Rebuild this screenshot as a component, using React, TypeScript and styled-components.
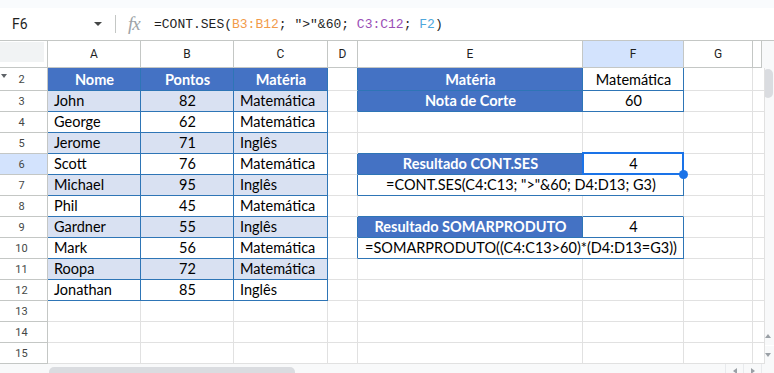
import { Fragment } from "react";
import styled, { createGlobalStyle } from "styled-components";

const BLUE = "#2e75b6";
const GRID = "#e1e1e1";
const HEAD_LINE = "#c4c7c5";
const FILL_HEAD = "#4472c4";
const FILL_BAND = "#d9e1f2";
const SELECT = "#1a73e8";
const ACTIVE = "#d3e3fd";

type Fill = "head" | "band" | "none";
type Align = "left" | "center";

interface CellData {
  text?: string;
  fill?: Fill;
  align?: Align;
  span?: number;
  selected?: boolean;
}

const COLUMNS = [
  { label: "A", width: 93 },
  { label: "B", width: 93 },
  { label: "C", width: 94 },
  { label: "D", width: 30 },
  { label: "E", width: 225 },
  { label: "F", width: 101 },
  { label: "G", width: 69 },
  { label: "", width: 9 },
];

const ROWS = Array.from({ length: 14 }, (_, i) => i + 2);

// blue bordered ranges (row from/to, col index from/to)
const TABLES = [
  { r1: 2, r2: 12, c1: 0, c2: 2 },
  { r1: 2, r2: 3, c1: 4, c2: 5 },
  { r1: 6, r2: 7, c1: 4, c2: 5 },
  { r1: 9, r2: 10, c1: 4, c2: 5 },
];

const inTable = (r: number, c: number) =>
  TABLES.some((t) => r >= t.r1 && r <= t.r2 && c >= t.c1 && c <= t.c2);

const students = [
  ["John", "82", "Matemática"],
  ["George", "62", "Matemática"],
  ["Jerome", "71", "Inglês"],
  ["Scott", "76", "Matemática"],
  ["Michael", "95", "Inglês"],
  ["Phil", "45", "Matemática"],
  ["Gardner", "55", "Inglês"],
  ["Mark", "56", "Matemática"],
  ["Roopa", "72", "Matemática"],
  ["Jonathan", "85", "Inglês"],
];

const summary: Record<number, CellData[]> = {
  2: [
    { text: "Matéria", fill: "head", align: "center" },
    { text: "Matemática", align: "center" },
  ],
  3: [
    { text: "Nota de Corte", fill: "head", align: "center" },
    { text: "60", align: "center" },
  ],
  6: [
    { text: "Resultado CONT.SES", fill: "head", align: "center" },
    { text: "4", align: "center", selected: true },
  ],
  7: [{ text: '=CONT.SES(C4:C13; ">"&60; D4:D13; G3)', align: "center", span: 2 }],
  9: [
    { text: "Resultado SOMARPRODUTO", fill: "head", align: "center" },
    { text: "4", align: "center" },
  ],
  10: [{ text: "=SOMARPRODUTO((C4:C13>60)*(D4:D13=G3))", align: "center", span: 2 }],
};

function rowCells(r: number): CellData[] {
  let left: CellData[] = [{}, {}, {}];
  if (r === 2) {
    left = ["Nome", "Pontos", "Matéria"].map((text) => ({ text, fill: "head" as Fill, align: "center" as Align }));
  } else if (r <= 12) {
    const fill: Fill = r % 2 === 1 ? "band" : "none";
    const [name, pts, subj] = students[r - 3];
    left = [
      { text: name, fill },
      { text: pts, fill, align: "center" },
      { text: subj, fill },
    ];
  }
  return [...left, {}, ...(summary[r] ?? [{}, {}]), {}, {}];
}

const GlobalStyle = createGlobalStyle`
  html, body {
    margin: 0;
    padding: 0;
    background: #fff;
    overflow: hidden;
  }
  body {
    font-family: Roboto, "Liberation Sans", sans-serif;
  }
`;

const Page = styled.div`
  width: 774px;
  height: 373px;
  overflow: hidden;
`;

const TopStrip = styled.div`
  height: 8px;
  background: #f9fbfd;
`;

const FormulaBar = styled.div`
  height: 32px;
  display: flex;
  align-items: center;
  border-bottom: 1px solid ${HEAD_LINE};
  background: #fff;
`;

const NameBox = styled.div`
  box-sizing: border-box;
  width: 108px;
  padding: 0 6px 0 12px;
  display: flex;
  align-items: center;
  justify-content: space-between;
  font-size: 14px;
  color: #1f1f1f;
`;

const Caret = styled.span`
  width: 0;
  height: 0;
  border-left: 4px solid transparent;
  border-right: 4px solid transparent;
  border-top: 4px solid #444746;
`;

const Divider = styled.span`
  width: 1px;
  height: 18px;
  margin-left: 7px;
  background: ${HEAD_LINE};
`;

const Fx = styled.span`
  margin-left: 12px;
  width: 16px;
  font-family: "Liberation Serif", serif;
  font-style: italic;
  font-size: 19px;
  color: #a0a4a8;
  letter-spacing: -1px;
`;

const Formula = styled.div`
  margin-left: 10px;
  font-family: "Liberation Mono", monospace;
  font-size: 13px;
  color: #1f1f1f;
  white-space: pre;
`;

const Ref = styled.span<{ $c: string }>`
  color: ${(p) => p.$c};
`;

const Sheet = styled.div`
  display: grid;
  grid-template-columns: 48px ${COLUMNS.map((c) => `${c.width}px`).join(" ")} 12px;
  grid-template-rows: 27px 23px repeat(13, 21px);
`;

const Corner = styled.div`
  box-sizing: border-box;
  border-right: 1px solid ${HEAD_LINE};
  border-bottom: 1px solid ${HEAD_LINE};
  padding-top: 1px;
`;

const CornerBox = styled.div`
  width: 44px;
  height: 20px;
  background: #f1f3f4;
`;

const ColHead = styled.div<{ $active?: boolean }>`
  box-sizing: border-box;
  display: flex;
  align-items: center;
  justify-content: center;
  border-right: 1px solid ${HEAD_LINE};
  border-bottom: 1px solid ${HEAD_LINE};
  background: ${(p) => (p.$active ? ACTIVE : "#fff")};
  font-size: 12px;
  color: #1f1f1f;
`;

const RowHead = styled.div<{ $active?: boolean }>`
  position: relative;
  box-sizing: border-box;
  display: flex;
  align-items: center;
  justify-content: center;
  padding-right: 4px;
  border-right: 1px solid ${HEAD_LINE};
  border-bottom: 1px solid ${HEAD_LINE};
  background: ${(p) => (p.$active ? ACTIVE : "#fff")};
  font-size: 11px;
  color: #444746;
`;

const HiddenMark = styled.span`
  position: absolute;
  left: 1px;
  top: 6px;
  width: 0;
  height: 0;
  border-left: 3.5px solid transparent;
  border-right: 3.5px solid transparent;
  border-top: 4px solid #5f6368;
`;

const Cell = styled.div<{
  $fill: Fill;
  $align: Align;
  $span: number;
  $rb: boolean;
  $bb: boolean;
  $selected?: boolean;
}>`
  position: ${(p) => (p.$selected ? "relative" : "static")};
  box-sizing: border-box;
  grid-column: span ${(p) => p.$span};
  display: flex;
  align-items: flex-end;
  justify-content: ${(p) => (p.$align === "center" ? "center" : "flex-start")};
  padding: 0 5px 1px 6px;
  border-right: 1px solid ${(p) => (p.$rb ? BLUE : GRID)};
  border-bottom: 1px solid ${(p) => (p.$bb ? BLUE : GRID)};
  background: ${(p) => (p.$fill === "head" ? FILL_HEAD : p.$fill === "band" ? FILL_BAND : "#fff")};
  color: ${(p) => (p.$fill === "head" ? "#fff" : "#000")};
  font-family: Lato, "Open Sans", sans-serif;
  font-size: 14.5px;
  font-weight: ${(p) => (p.$fill === "head" ? 700 : 400)};
  line-height: 19px;
  white-space: nowrap;

  ${(p) =>
    p.$selected &&
    `
    &::after {
      content: "";
      position: absolute;
      top: -2px;
      left: -1px;
      right: -1px;
      bottom: -1px;
      border: 2px solid ${SELECT};
    }
  `}
`;

const Handle = styled.span`
  position: absolute;
  right: -5px;
  bottom: -5px;
  width: 9px;
  height: 9px;
  border-radius: 50%;
  background: ${SELECT};
  z-index: 2;
`;

const VScroll = styled.div`
  grid-column: 10;
  grid-row: 1 / span 15;
  display: flex;
  flex-direction: column;
  background: #f8f9fa;
`;

const VThumb = styled.div`
  margin: 28px 1px 0 1px;
  height: 29px;
  border-radius: 5px;
  background: #dadce0;
`;

const Spacer = styled.div`
  flex: 1;
`;

const ArrowBtn = styled.div<{ $line?: boolean }>`
  height: 18px;
  display: flex;
  align-items: center;
  justify-content: center;
  border-top: ${(p) => (p.$line ? `1px solid #fff` : "0")};
`;

const Tri = styled.span<{ $dir: "up" | "down" | "left" | "right" }>`
  width: 0;
  height: 0;
  ${(p) =>
    p.$dir === "up"
      ? "border-left:3px solid transparent;border-right:3px solid transparent;border-bottom:4px solid #9aa0a6;"
      : p.$dir === "down"
        ? "border-left:3px solid transparent;border-right:3px solid transparent;border-top:4px solid #9aa0a6;"
        : p.$dir === "left"
          ? "border-top:3px solid transparent;border-bottom:3px solid transparent;border-right:4px solid #9aa0a6;"
          : "border-top:3px solid transparent;border-bottom:3px solid transparent;border-left:4px solid #9aa0a6;"}
`;

const HScroll = styled.div`
  display: flex;
  height: 14px;
  background: #f8f9fa;
`;

const HLead = styled.div`
  width: 48px;
`;

const HTrack = styled.div`
  flex: 1;
  padding: 3px 0 0 1px;
`;

const HThumb = styled.div`
  width: 246px;
  height: 10px;
  border-radius: 5px;
  background: #dadce0;
`;

const HArrow = styled.div`
  width: 18px;
  box-sizing: border-box;
  border-left: 1px solid #e8eaed;
  display: flex;
  justify-content: center;
  padding-top: 4px;
`;

const HCorner = styled.div`
  width: 12px;
  border-left: 1px solid #e8eaed;
`;

export default function App() {
  return (
    <Page>
      <GlobalStyle />
      <TopStrip />
      <FormulaBar>
        <NameBox>
          F6
          <Caret />
        </NameBox>
        <Divider />
        <Fx>fx</Fx>
        <Formula>
          =CONT.SES(<Ref $c="#f29b4a">B3:B12</Ref>; "&gt;"&amp;60; <Ref $c="#9b4fb6">C3:C12</Ref>;{" "}
          <Ref $c="#4fa8dc">F2</Ref>)
        </Formula>
      </FormulaBar>

      <Sheet>
        <Corner>
          <CornerBox />
        </Corner>
        {COLUMNS.map((c, i) => (
          <ColHead key={i} $active={c.label === "F"}>
            {c.label}
          </ColHead>
        ))}
        <VScroll>
          <VThumb />
          <Spacer />
          <ArrowBtn>
            <Tri $dir="up" />
          </ArrowBtn>
          <ArrowBtn $line>
            <Tri $dir="down" />
          </ArrowBtn>
        </VScroll>

        {ROWS.map((r) => {
          let col = 0;
          return (
            <Fragment key={r}>
              <RowHead $active={r === 6}>
                {r === 2 && <HiddenMark />}
                {r}
              </RowHead>
              {rowCells(r).map((cell, i) => {
                const span = cell.span ?? 1;
                const c = col;
                col += span;
                const last = c + span - 1;
                return (
                  <Cell
                    key={i}
                    $fill={cell.fill ?? "none"}
                    $align={cell.align ?? "left"}
                    $span={span}
                    $rb={inTable(r, last) || inTable(r, last + 1)}
                    $bb={inTable(r, c) || inTable(r + 1, c)}
                    $selected={cell.selected}
                  >
                    {cell.text}
                    {cell.selected && <Handle />}
                  </Cell>
                );
              })}
            </Fragment>
          );
        })}
      </Sheet>

      <HScroll>
        <HLead />
        <HTrack>
          <HThumb />
        </HTrack>
        <HArrow>
          <Tri $dir="left" />
        </HArrow>
        <HArrow>
          <Tri $dir="right" />
        </HArrow>
        <HCorner />
      </HScroll>
    </Page>
  );
}
